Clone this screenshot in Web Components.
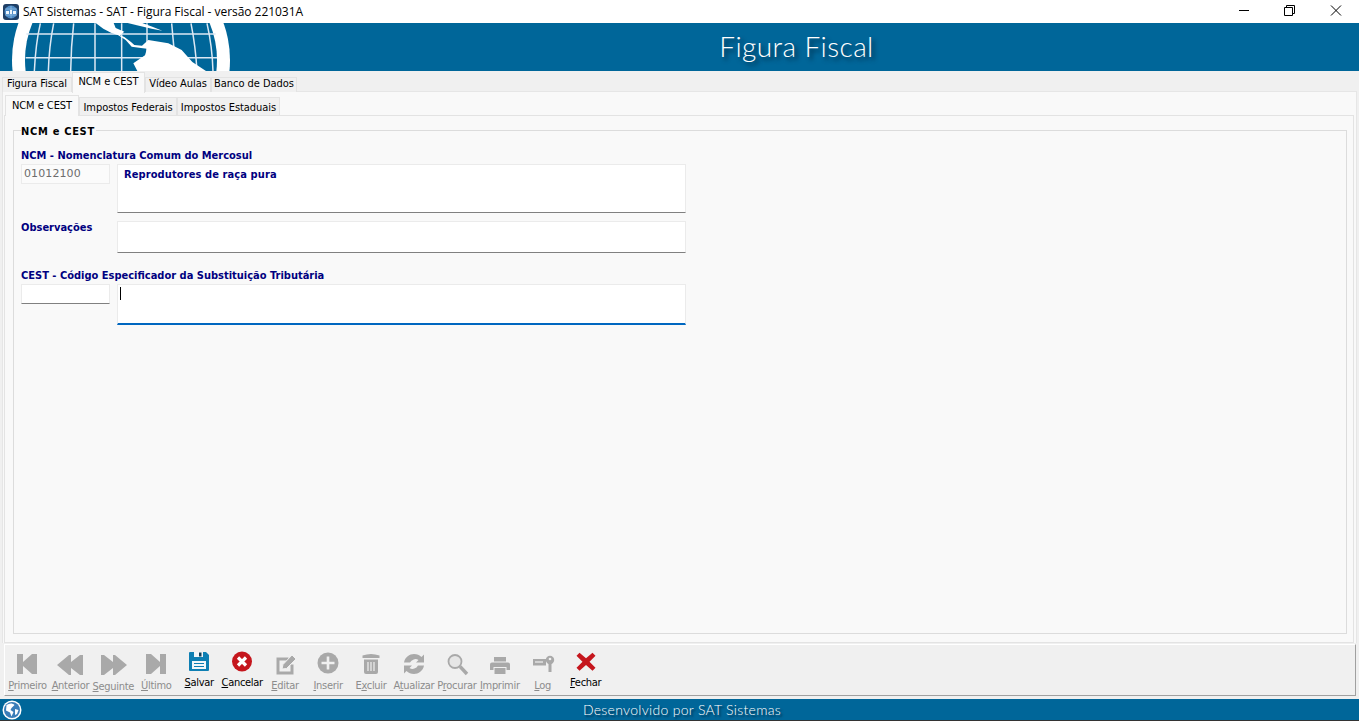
<!DOCTYPE html>
<html lang="pt">
<head>
<meta charset="utf-8">
<title>SAT Sistemas</title>
<style>
  html, body { margin: 0; height: 100%; }
  body { width: 1359px; height: 721px; overflow: hidden; background: #f0f0f0; font-family: "Liberation Sans", Arial, sans-serif; }
  app-window { height: 721px; }
</style>
</head>
<body>
<app-window>
  <title-bar slot="title">SAT Sistemas - SAT - Figura Fiscal - versão 221031A</title-bar>
  <app-banner slot="banner">Figura Fiscal</app-banner>
  <tab-strip slot="outer" tabs="Figura Fiscal|NCM e CEST|Vídeo Aulas|Banco de Dados" active="1" widths="70,73,66,86" style="height:21px;padding-left:2px;--tab-h:15px;--tab-lh:12px;--on-h:21px;--on-lh:17px"></tab-strip>
  <tab-strip slot="inner" tabs="NCM e CEST|Impostos Federais|Impostos Estaduais" active="0" widths="74,98,103" style="height:20px;padding-left:1px;--tab-h:18px;--tab-lh:19px;--on-h:21px;--on-lh:19px"></tab-strip>
  <ncm-form slot="form"></ncm-form>
  <tool-bar slot="toolbar"></tool-bar>
  <app-footer slot="footer">Desenvolvido por SAT Sistemas</app-footer>
</app-window>

<script>
const TAHOMA = '"DejaVu Sans Condensed", "DejaVu Sans", sans-serif';

class AppWindow extends HTMLElement {
  constructor() {
    super();
    this.attachShadow({mode: 'open'}).innerHTML = `
      <style>
        :host { display: flex; flex-direction: column; }
        .outer { margin: -1px 2px 0 2px; height: 552px; box-sizing: border-box; border: 1px solid #e6e6e6; border-bottom: 0; background: #f9f9f9; display: flex; flex-direction: column; padding: 3px 2px 0 1px; }
        .page { flex: 1; border: 1px solid #e3e3e3; background: #f9f9f9; padding: 14px 6px 8px 8px; display: flex; min-height: 0; }
      </style>
      <slot name="title"></slot>
      <slot name="banner"></slot>
      <slot name="outer"></slot>
      <div class="outer">
        <slot name="inner"></slot>
        <div class="page"><slot name="form"></slot></div>
      </div>
      <slot name="toolbar"></slot>
      <slot name="footer"></slot>
    `;
  }
}

class TitleBar extends HTMLElement {
  constructor() {
    super();
    this.attachShadow({mode: 'open'}).innerHTML = `
      <style>
        :host { display: flex; align-items: center; height: 23px; background: #fff; font: 12px/23px "Open Sans", "Noto Sans", sans-serif; color: #000; }
        .ico { width: 16px; height: 16px; margin: 0 4px 0 3px; }
        .txt { flex: 1; letter-spacing: -0.04px; }
        .btns { display: flex; align-items: center; }
        .btns svg { display: block; width: 46px; height: 23px; }
      </style>
      <svg class="ico" viewBox="0 0 16 16">
        <rect width="16" height="16" rx="3" fill="#1f3f66"/>
        <circle cx="8" cy="8" r="6.5" fill="#4f8cc6"/>
        <path d="M2 5h12M2 11h12M8 2v12" stroke="#9cc4e6" stroke-width=".7"/>
        <path d="M3 7h3v3H3zM7 6h2v4H7zM10 7h3v3h-3z" fill="#eef6fc"/>
      </svg>
      <span class="txt"><slot></slot></span>
      <div class="btns">
        <svg viewBox="0 0 46 23"><path d="M18 10.5h10" stroke="#000"/></svg>
        <svg viewBox="0 0 46 23"><path d="M17.5 7.5h8v8h-8z M19.5 7.5v-2h8v8h-2" fill="none" stroke="#000"/></svg>
        <svg viewBox="0 0 46 23"><path d="M18 5.5l10 10M28 5.5l-10 10" stroke="#000" fill="none"/></svg>
      </div>
    `;
  }
}

class AppBanner extends HTMLElement {
  constructor() {
    super();
    this.attachShadow({mode: 'open'}).innerHTML = `
      <style>
        :host { display: block; position: relative; height: 48px; background: #006699; overflow: hidden; }
        .globe { position: absolute; left: 0; top: 0; width: 240px; height: 48px; }
        .cap { height: 46px; display: flex; align-items: center; justify-content: center; padding-left: 234px; box-sizing: border-box;
          font: 300 28px/46px "Lato", "Noto Sans", sans-serif; color: #fff; text-shadow: 3px 3px 4px #012b45; letter-spacing: 0.4px; }
      </style>
      <svg class="globe" viewBox="0 0 240 48">
        <g transform="translate(5,-3) scale(.33333)">
          <circle cx="348" cy="120" r="327" fill="#fff"/>
          <circle cx="348" cy="120" r="288" fill="#006699"/>
          <g fill="none" stroke="#dbe8f4" stroke-width="4.5">
            <path d="M64 42H632M62 113H636"/>
            <path d="M106 10Q92 70 88 155M146 10Q132 80 130 155M206 10Q198 80 197 155M270 10V155M350 10V155M426 10V155M500 10Q508 80 510 155M558 10Q572 80 576 155M606 10Q622 80 624 155"/>
          </g>
          <path d="M272 9H326L332 24 358 35 345 46 358 51 378 66 388 75 411 77 430 60 490 70 530 90 562 126 606 155H398L385 130 420 106 426 86 408 84 380 80 362 60 340 46 318 38 295 26z" fill="#fff"/>
          <path d="M368 9H412L442 20 472 32 440 26 402 17z" fill="#fff"/>
        </g>
      </svg>
      <div class="cap"><slot></slot></div>
    `;
  }
}

class TabStrip extends HTMLElement {
  constructor() {
    super();
    const tabs = this.getAttribute('tabs').split('|');
    const active = +this.getAttribute('active');
    const widths = this.getAttribute('widths').split(',');
    const items = tabs.map((t, i) => `<div class="tab ${i === active ? 'on' : ''}" style="width:${widths[i]}px">${t}</div>`).join('');
    this.attachShadow({mode: 'open'}).innerHTML = `
      <style>
        :host { display: flex; align-items: flex-start; font: 11px ${TAHOMA}; letter-spacing: -.05px; color: #000; position: relative; z-index: 1; }
        .tab { box-sizing: border-box; align-self: flex-end; height: var(--tab-h); line-height: var(--tab-lh); text-align: center; background: #f0f0f0; border: 1px solid #e3e3e3; border-bottom: 0; white-space: nowrap; }
        .on { height: var(--on-h); line-height: var(--on-lh); background: #f9f9f9; margin-bottom: -1px; position: relative; }
      </style>
      ${items}
    `;
  }
}

class FieldBox extends HTMLElement {
  constructor() {
    super();
    this.attachShadow({mode: 'open'}).innerHTML = `
      <style>
        :host { display: block; box-sizing: border-box; background: #fff; border: 1px solid #ebebeb; border-bottom: 1px solid #808080; font: bold 11px/13px ${TAHOMA}; letter-spacing: .1px; color: #000080; padding: 3px 6px; position: relative; }
        :host([focused]) { border-bottom: 2px solid #0067c0; }
        :host([readonly]) { background: #fbfbfb; border-bottom-color: #ebebeb; font: 11px/13px "DejaVu Sans", sans-serif; color: #6d6d6d; padding: 2px; letter-spacing: .1px; }
        .caret { position: absolute; left: 2px; top: 2px; width: 1px; height: 13px; background: #000; display: none; }
        :host([focused]) .caret { display: block; }
      </style>
      <span class="caret"></span><slot></slot>
    `;
  }
}
customElements.define('field-box', FieldBox);

class NcmForm extends HTMLElement {
  constructor() {
    super();
    this.attachShadow({mode: 'open'}).innerHTML = `
      <style>
        :host { flex: 1; display: block; position: relative; box-sizing: border-box; border: 1px solid #dcdcdc; padding: 17px 7px 0 7px; font: bold 11px ${TAHOMA}; color: #000080; }
        .legend { position: absolute; left: 7px; top: -6px; background: #f9f9f9; padding-right: 1px; color: #000; font: bold 11px/14px ${TAHOMA}; letter-spacing: .7px; }
        .lbl { height: 14px; line-height: 16px; }
        .row { display: grid; grid-template-columns: 89px 569px; column-gap: 7px; align-items: start; }
      </style>
      <div class="legend">NCM e CEST</div>
      <div class="lbl">NCM - Nomenclatura Comum do Mercosul</div>
      <div class="row" style="margin-top:2px">
        <field-box readonly style="height:20px">01012100</field-box>
        <field-box style="height:49px">Reprodutores de raça pura</field-box>
      </div>
      <div class="row" style="margin-top:8px">
        <div class="lbl" style="line-height:14px">Observações</div>
        <field-box style="height:32px"></field-box>
      </div>
      <div class="lbl" style="margin-top:15px">CEST - Código Especificador da Substituição Tributária</div>
      <div class="row" style="margin-top:2px">
        <field-box style="height:20px"></field-box>
        <field-box focused style="height:41px"></field-box>
      </div>
    `;
  }
}

// icons sit on a 24 box, 1 unit = 1px
const ICONS = {
  first: '<path d="M2 2h6v8l9-8h5v20h-5l-9-8v8H2z"/>',
  prev: '<path d="M-1 13L11 3h2v7l9-7h3v20h-3l-9-7v7h-2z"/>',
  next: '<path d="M26 13L14 3h-2v7L3 3H0v20h3l9-7v7h2z"/>',
  last: '<path d="M22 2h-6v8L7 2H2v20h5l9-8v8h6z"/>',
  save: '<path d="M2 4a1 1 0 0 1 1-1h16l3 3v15a1 1 0 0 1-1 1H3a1 1 0 0 1-1-1z" fill="#0e7fb3"/><rect x="7" y="3" width="9" height="5" fill="#f2f7fa"/><rect x="12" y="3.500" width="2.500" height="4" fill="#123f58"/><rect x="5" y="12" width="14" height="8" fill="#f2f7fa"/><path d="M7 14.500h10M7 17.500h10" stroke="#0e7fb3"/>',
  cancel: '<circle cx="12" cy="12.500" r="10" fill="#c5161d"/><path d="M8 8.500l8 8M16 8.500l-8 8" stroke="#fff" stroke-width="3.200"/>',
  edit: '<path d="M3.500 5.500h12v3h-9v11h11v-7h3v10h-17z"/><path d="M9 17l1-4.500L19 3l4 4-9.500 9.500z" stroke="#f0f0f0"/>',
  add: '<circle cx="12" cy="11" r="10.500"/><path d="M12 4.500v13M5.500 11h13" stroke="#f0f0f0" stroke-width="2.600"/>',
  del: '<path d="M3.500 3.500q8.500-3 17 0v2.500h-17z"/><path d="M5 7.500h14V20a2 2 0 0 1-2 2H7a2 2 0 0 1-2-2z"/><path d="M9 10v9M12 10v9M15 10v9" stroke="#f0f0f0" stroke-width="1.200"/>',
  refresh: '<path d="M2 10.500C3 5 7.500 2 12 2c3 0 5.500 1 7.500 3L22 2.500v8H14l2.500-2.500A6 6 0 0 0 8 10.500z"/><path d="M22 13.500C21 19 16.500 22 12 22c-3 0-5.500-1-7.500-3L2 21.500v-8h8l-2.500 2.500a6 6 0 0 0 8.500-2.500z"/>',
  find: '<circle cx="10" cy="9.500" r="6.500" fill="#e6e6e6" stroke="#a9a9a9" stroke-width="1.800"/><path d="M15 14.500l7 7.500" stroke="#a9a9a9" stroke-width="3.400"/>',
  print: '<rect x="6" y="5" width="12" height="4.500"/><path d="M4 10.500h16a2 2 0 0 1 2 2V18h-3.500v-3h-13v3H2v-5.500a2 2 0 0 1 2-2z"/><rect x="6.500" y="16" width="11" height="6"/>',
  log: '<rect x="2" y="7" width="13" height="6.500"/><path d="M4 10h8" stroke="#f0f0f0" stroke-width="1.200"/><circle cx="19" cy="8" r="4.200"/><path d="M17.500 10h3v10h-3z"/><circle cx="19" cy="7" r="1.300" fill="#f0f0f0"/>',
  close: '<path d="M5.500 3.700l6.500 5.600 6.500-5.600 3 3-6 6 6 6-3 3-6.500-5.600-6.500 5.600-3-3 6-6-6-6z" fill="#c5161d"/>'
};

class ToolButton extends HTMLElement {
  constructor() {
    super();
    const key = this.getAttribute('key');
    const letter = this.getAttribute('ul');
    const label = this.getAttribute('label');
    const i = label.indexOf(letter);
    const dy = this.getAttribute('dy') || 2;
    this.attachShadow({mode: 'open'}).innerHTML = `
      <style>
        :host { display: flex; flex-direction: column; align-items: center; padding-top: 7px; font: 11px ${TAHOMA}; letter-spacing: -.3px; white-space: nowrap; color: #8c8c8c; }
        :host([on]) { padding-top: 4px; color: #000; }
        svg { width: 24px; height: 24px; fill: #a9a9a9; display: block; overflow: visible; }
        .t { line-height: 16px; width: 0; display: flex; justify-content: center; }
      </style>
      <svg viewBox="0 0 24 24">${ICONS[key]}</svg>
      <div class="t" style="margin-top:${dy}px"><span>${label.slice(0, i)}<u>${letter}</u>${label.slice(i + 1)}</span></div>
    `;
  }
}
customElements.define('tool-button', ToolButton);

class ToolBar extends HTMLElement {
  constructor() {
    super();
    const btns = [
      ['first', 'Primeiro', 'P'], ['prev', 'Anterior', 'A'], ['next', 'Seguinte', 'S', 0, 3], ['last', 'Último', 'Ú'],
      ['save', 'Salvar', 'S', 1], ['cancel', 'Cancelar', 'C', 1], ['edit', 'Editar', 'E'], ['add', 'Inserir', 'I'],
      ['del', 'Excluir', 'x'], ['refresh', 'Atualizar', 't'], ['find', 'Procurar', 'r'], ['print', 'Imprimir', 'I'],
      ['log', 'Log', 'L'], ['close', 'Fechar', 'F', 1]
    ];
    const html = btns.map(([key, label, ul, on, dy]) =>
      `<tool-button key="${key}" label="${label}" ul="${ul}" ${on ? 'on' : ''} ${dy ? `dy="${dy}"` : ''} style="width:42.95px"></tool-button>`).join('');
    this.attachShadow({mode: 'open'}).innerHTML = `
      <style>
        :host { display: flex; height: 52px; box-sizing: border-box; margin: 1px 3px 0 4px; border-right: 1px solid #a0a0a0; border-bottom: 1px solid #a0a0a0; border-left: 1px solid #fff; border-top: 1px solid #fff; background: #f0f0f0; padding-left: 1px; }
      </style>
      ${html}
    `;
  }
}

class AppFooter extends HTMLElement {
  constructor() {
    super();
    this.attachShadow({mode: 'open'}).innerHTML = `
      <style>
        :host { display: block; position: relative; box-sizing: border-box; margin-top: 3px; height: 22px; background: #006699; border-bottom: 1px solid #333; color: #fff; text-align: center; font: 300 14px/21px "Lato", sans-serif; letter-spacing: .3px; text-shadow: 2px 2px 2px #012b45; }
        svg { position: absolute; left: 2px; top: 1px; width: 20px; height: 20px; }
        .c { padding-left: 5px; }
      </style>
      <svg viewBox="0 0 20 20"><circle cx="10" cy="10" r="9.500" fill="#fff"/><circle cx="10" cy="10" r="8" fill="#3a7db8"/><path d="M4.500 5c3-2 6-2 8 0l-3 3-1 2 3 2-2 4.500-1.500-4-4-2zM13 9l3.500 1-1.500 4-2 1z" fill="#fff"/></svg>
      <div class="c"><slot></slot></div>
    `;
  }
}

customElements.define('app-window', AppWindow);
customElements.define('title-bar', TitleBar);
customElements.define('app-banner', AppBanner);
customElements.define('tab-strip', TabStrip);
customElements.define('ncm-form', NcmForm);
customElements.define('tool-bar', ToolBar);
customElements.define('app-footer', AppFooter);
</script>
</body>
</html>
